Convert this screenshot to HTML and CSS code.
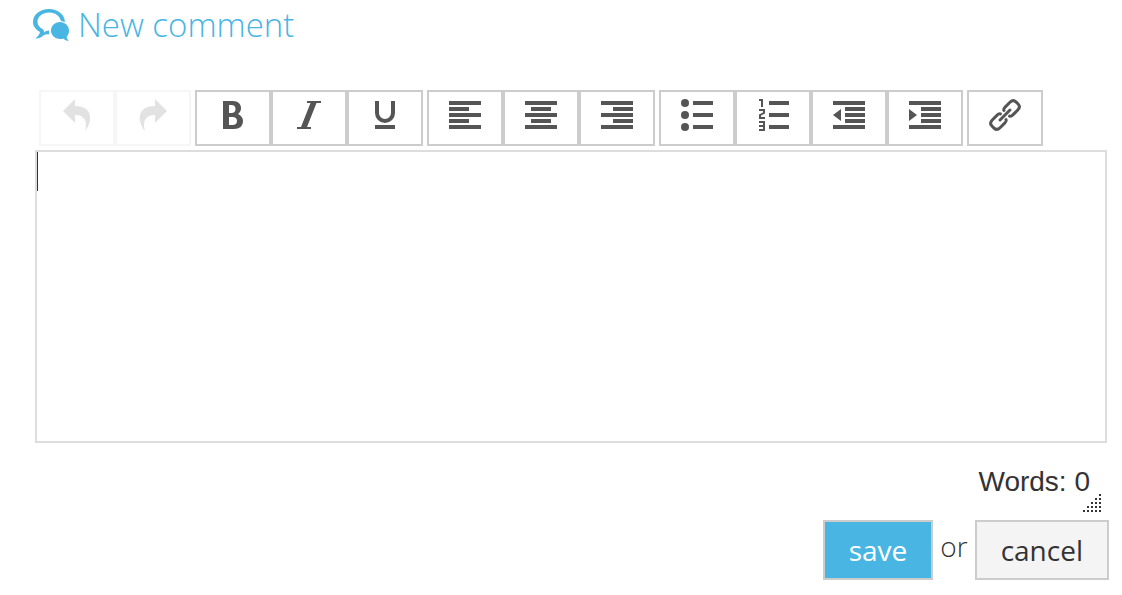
FILE: index.html
```html
<!DOCTYPE html>
<html lang="en">
<head>
    <meta charset="UTF-8">
    <meta name="viewport" content="width=device-width, initial-scale=1.0">
    <title>New comment</title>
    <link rel="stylesheet" href="styles.css">
</head>
<body>
    <form class="comment-form">
        <h2 class="title">
            <svg class="title-icon" width="36" height="32" viewBox="0 0 36 32" aria-hidden="true">
                <path d="M16 0C7 0 0 5.500 0 13c0 4 2.500 7.500 7 10C6.500 25.500 5 27.500 2.200 29.500c3.300.2 6-.8 8.800-3.500 1.800-.8 3.300-.8 5-.5v-4c-2 .2-3.600.8-5 2 .2-1.500-.3-2.700-1.500-3.500C6.500 18.500 4.500 16 4.500 13 4.500 7.500 9.500 3.500 16.500 3.500 22.500 3.500 26.500 7 28 12l4 1C31.500 5.500 25 0 16 0z"/>
                <path d="M27 13c-5 0-9 3.800-9 8.500s4 8.500 9 8.500c1.200 0 2.300-.2 3.300-.6 1.500 1.400 3.200 2.300 5.400 2.400-1.200-1.200-1.900-2.400-2-4 1.500-1.600 2.300-3.800 2.300-6.300 0-4.700-4-8.500-9-8.500z"/>
            </svg>
            New comment
        </h2>

        <div class="toolbar">
            <div class="btn-group">
                <button type="button" class="tool" aria-label="Undo" disabled>
                    <svg viewBox="0 0 32 32"><path d="M14 0 2 12l12 12v-8c9 0 13 6 10 16 9-11 7-25-10-25z"/></svg>
                </button>
                <button type="button" class="tool" aria-label="Redo" disabled>
                    <svg viewBox="0 0 32 32"><path d="M18 0l12 12-12 12v-8c-9 0-13 6-10 16-9-11-7-25 10-25z"/></svg>
                </button>
            </div>
            <div class="btn-group">
                <button type="button" class="tool" aria-label="Bold">
                    <svg viewBox="0 0 32 32"><path fill-rule="evenodd" d="M6 2h10c5 0 8 3 8 7 0 2.500-1 4.500-3 6 3.200 1.500 5 4 5 7 0 5-3.500 8-9 8H6zM12 6v8h2.500c2.500 0 4-1.500 4-4s-1.500-4-4-4zM12 18v8h3.500c2.800 0 4.500-1.500 4.500-4s-1.700-4-4.500-4z"/></svg>
                </button>
                <button type="button" class="tool" aria-label="Italic">
                    <svg viewBox="0 0 32 32"><path d="M14 2h14v2h-4.500L14 28h4v2H4v-2h4L17.500 4H14z"/></svg>
                </button>
                <button type="button" class="tool" aria-label="Underline">
                    <svg viewBox="0 0 32 32"><path d="M6 26h20v4H6zM6 2h4v12a6 6 0 0 0 12 0V2h4v12a10 10 0 0 1-20 0z"/></svg>
                </button>
            </div>
            <div class="btn-group">
                <button type="button" class="tool" aria-label="Align left">
                    <svg viewBox="0 0 32 32"><path d="M0 2h32v4H0zM0 8h20v4H0zM0 14h32v4H0zM0 20h20v4H0zM0 26h32v4H0z"/></svg>
                </button>
                <button type="button" class="tool" aria-label="Align center">
                    <svg viewBox="0 0 32 32"><path d="M0 2h32v4H0zM6 8h20v4H6zM0 14h32v4H0zM6 20h20v4H6zM0 26h32v4H0z"/></svg>
                </button>
                <button type="button" class="tool" aria-label="Align right">
                    <svg viewBox="0 0 32 32"><path d="M0 2h32v4H0zM12 8h20v4H12zM0 14h32v4H0zM12 20h20v4H12zM0 26h32v4H0z"/></svg>
                </button>
            </div>
            <div class="btn-group">
                <button type="button" class="tool" aria-label="Bullet list">
                    <svg viewBox="0 0 32 32"><path d="M12 2h20v4H12zM12 14h20v4H12zM12 26h20v4H12z"/><circle cx="4" cy="4" r="4"/><circle cx="4" cy="16" r="4"/><circle cx="4" cy="28" r="4"/></svg>
                </button>
                <button type="button" class="tool" aria-label="Numbered list">
                    <svg viewBox="0 0 32 32"><path d="M12 2h20v4H12zM12 14h20v4H12zM12 26h20v4H12zM6 0v8H4V2H2V0zM4 16.400V18h4v2H2v-4.600l4-1.800V12H2v-2h6v4.600zM8 22v10H2v-2h4v-2H2v-2h4v-2H2v-2z"/></svg>
                </button>
                <button type="button" class="tool" aria-label="Decrease indent">
                    <svg viewBox="0 0 32 32"><path d="M0 2h32v4H0zM12 8h20v4H12zM12 14h20v4H12zM12 20h20v4H12zM0 26h32v4H0zM8 10v12L0 16z"/></svg>
                </button>
                <button type="button" class="tool" aria-label="Increase indent">
                    <svg viewBox="0 0 32 32"><path d="M0 2h32v4H0zM12 8h20v4H12zM12 14h20v4H12zM12 20h20v4H12zM0 26h32v4H0zM0 10v12l8-6z"/></svg>
                </button>
            </div>
            <div class="btn-group">
                <button type="button" class="tool" aria-label="Insert link">
                    <svg viewBox="0 0 32 32">
                        <g class="link-shape" transform="rotate(-45 16 16)">
                            <path d="M9 16h14M18.500 12q.5-1.500 3.500-1.500h6.500q4.500 0 4.500 4v3q0 4-4.500 4H22q-3 0-3.500-1.500M13.500 12q-.5-1.500-3.500-1.500H3.500q-4.500 0-4.500 4v3q0 4 4.500 4H10q3 0 3.500-1.500"/>
                        </g>
                    </svg>
                </button>
            </div>
        </div>

        <div class="editor">
            <textarea class="editor-text" aria-label="Comment" rows="7"></textarea>
            <span class="caret"></span>
        </div>

        <div class="statusbar">
            <span class="word-count">Words: 0</span>
            <svg class="resize" width="18" height="18" viewBox="0 0 18 18" aria-hidden="true">
                <path d="M16 0h2v2h-2zM12 4h2v2h-2zM16 4h2v2h-2zM8 8h2v2H8zM12 8h2v2h-2zM16 8h2v2h-2zM4 12h2v2H4zM8 12h2v2H8zM12 12h2v2h-2zM16 12h2v2h-2zM0 16h2v2H0zM4 16h2v2H4zM8 16h2v2H8zM12 16h2v2h-2zM16 16h2v2h-2z"/>
            </svg>
        </div>

        <div class="actions">
            <button type="submit" class="btn btn-save">save</button>
            <span class="or">or</span>
            <button type="button" class="btn btn-cancel">cancel</button>
        </div>
    </form>
</body>
</html>
```

FILE: styles.css
```css
body {
    font-family: 'Open Sans', sans-serif;
    font-size: 28px;
    background-color: #fff;
    margin: 0;
    color: #333;
}

.comment-form {
    padding: 5px 15px 15px 35px;
}

.title {
    display: flex;
    align-items: center;
    gap: 9px;
    margin: 0 0 45px -2px;
    font-size: 33px;
    font-weight: 300;
    line-height: 40px;
    color: #48b5e3;
}

.title-icon {
    fill: #48b5e3;
}

.toolbar {
    display: flex;
    flex-wrap: wrap;
    gap: 4px;
    padding: 0 4px;
    margin-bottom: 4px;
}

.btn-group {
    display: flex;
}

.tool {
    width: 76px;
    height: 56px;
    padding: 7px 0 13px;
    background: #fff;
    border: 2px solid #ccc;
    box-sizing: border-box;
    cursor: pointer;
}

.tool svg {
    display: block;
    width: 32px;
    height: 32px;
    margin: 0 auto;
    overflow: visible;
    fill: #555;
}

.tool .link-shape {
    fill: none;
    stroke: #555;
    stroke-width: 3;
    stroke-linecap: round;
}

.tool:disabled {
    border-color: #f6f6f6;
    cursor: default;
}

.tool:disabled svg {
    fill: #e2e2e2;
}

.editor {
    position: relative;
    border: 2px solid #ddd;
}

.editor-text {
    display: block;
    width: 100%;
    height: 289px;
    padding: 0;
    border: none;
    outline: none;
    resize: none;
    box-sizing: border-box;
    font: inherit;
    color: inherit;
}

/* insertion point */
.caret {
    position: absolute;
    top: 0;
    left: 0;
    width: 1px;
    height: 39px;
    background: #333;
}

.statusbar {
    display: flex;
    justify-content: flex-end;
    align-items: flex-end;
    height: 69px;
    padding-right: 6px;
}

.word-count {
    font-family: 'Liberation Sans', Arial, sans-serif;
    line-height: 32px;
    padding-bottom: 14px;
    margin-right: -7px;
}

.resize {
    fill: #333;
}

.actions {
    display: flex;
    justify-content: flex-end;
    gap: 7px;
    margin: 8px -2px 0 0;
}

.or {
    font-weight: 300;
    line-height: 52px;
}

.btn {
    height: 60px;
    padding: 0 24px;
    border: 2px solid #ccc;
    box-sizing: border-box;
    font-family: inherit;
    font-size: 28px;
    cursor: pointer;
}

.btn-save {
    background-color: #48b5e3;
    color: #fff;
}

.btn-cancel {
    background-color: #f4f4f4;
    color: #333;
}
```
